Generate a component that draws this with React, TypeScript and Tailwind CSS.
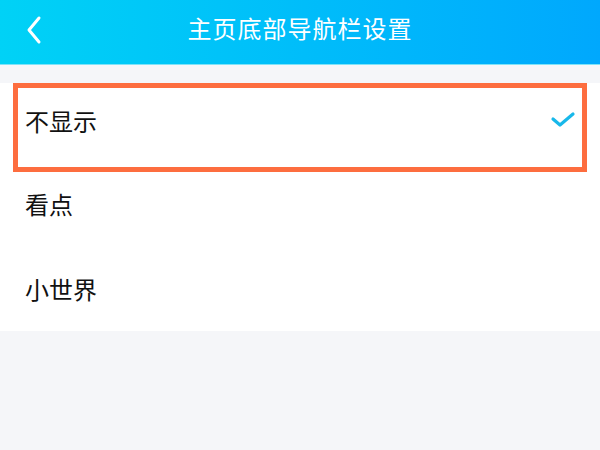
import React from "react";

export default function App() {
  return (
    <div
      className="w-[600px] h-[450px] bg-[#f5f6f9] overflow-hidden flex flex-col"
      style={{ fontFamily: '"Noto Sans CJK SC", "Noto Sans", sans-serif' }}
    >
      <div className="h-[65px] bg-gradient-to-r from-[#00d2f6] to-[#00a8fd] relative flex items-center justify-center pb-[8px] border-b border-[#7fe3f8]">
        <svg
          className="absolute left-[24px] top-[15px]"
          width="20"
          height="30"
          viewBox="0 0 20 30"
          fill="none"
        >
          <path d="M15 3 L5 15 L15 27" stroke="white" strokeWidth="3" strokeLinecap="round" strokeLinejoin="round" />
        </svg>
        <span className="text-white text-[24px] tracking-[1px] leading-none">主页底部导航栏设置</span>
      </div>
      <div className="h-[18px]" />
      <div className="bg-white h-[248px] flex flex-col overflow-hidden">
        <div className="h-[89px] shrink-0 mx-[13px] border-[5px] border-[#fd6d3f] flex items-start justify-between pl-[7px] pr-[6px] pt-[21px]">
          <span className="text-[#111] text-[24px] leading-none">不显示</span>
          <svg className="mt-[1px]" width="26" height="20" viewBox="0 0 26 20" fill="none">
            <path d="M3 9 L10 15 L23 4" stroke="#18b8ea" strokeWidth="3.2" strokeLinecap="round" strokeLinejoin="round" />
          </svg>
        </div>
        <div className="h-[85px] shrink-0 flex items-start pl-[25px] pt-[20px]">
          <span className="text-[#111] text-[24px] leading-none">看点</span>
        </div>
        <div className="h-[85px] shrink-0 flex items-start pl-[25px] pt-[20px]">
          <span className="text-[#111] text-[24px] leading-none">小世界</span>
        </div>
      </div>
    </div>
  );
}
